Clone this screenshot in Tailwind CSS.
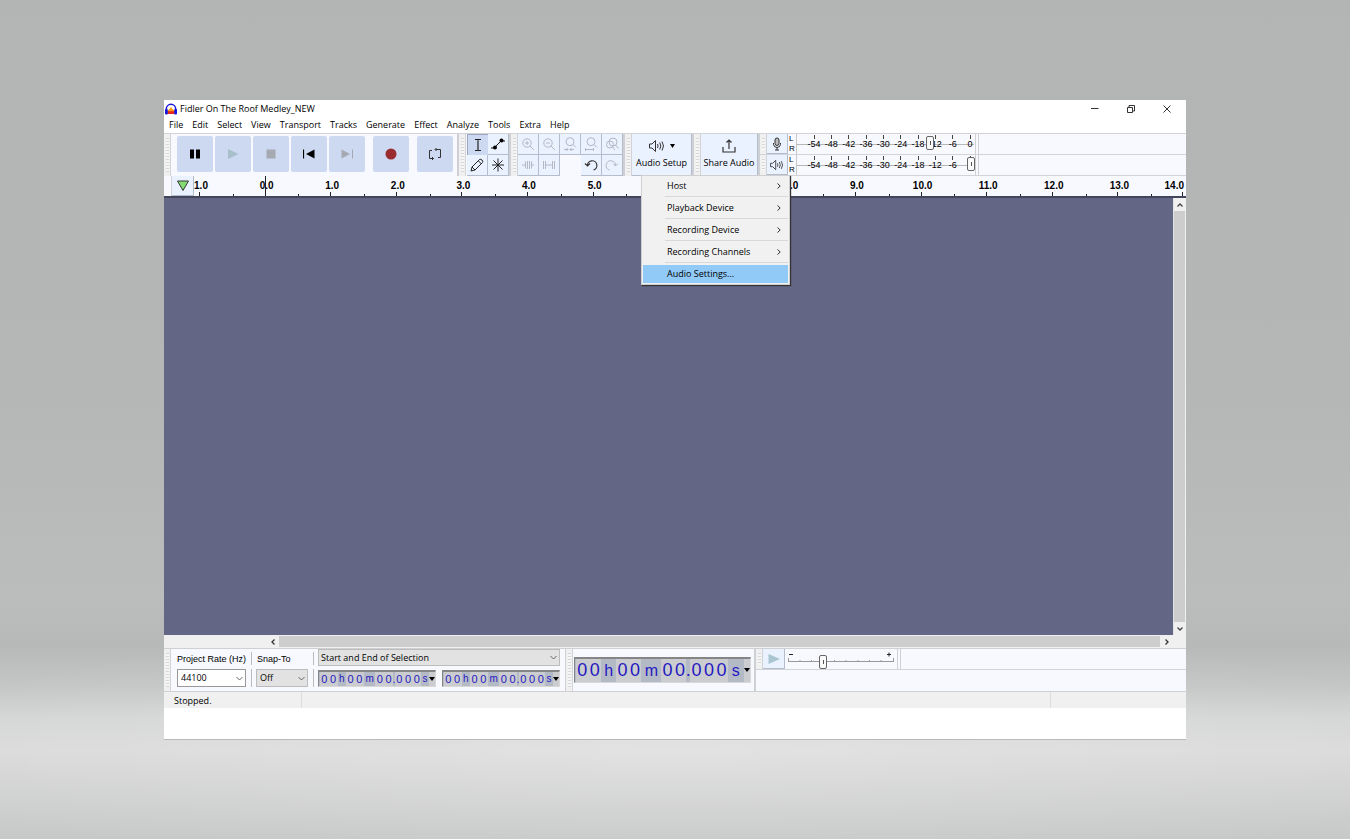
<!DOCTYPE html>
<html lang="en">
<head>
  <meta charset="UTF-8" />
  <meta name="viewport" content="width=device-width, initial-scale=1.0" />
  <title>Fidler On The Roof Medley_NEW</title>
  <script src="https://cdn.jsdelivr.net/npm/@tailwindcss/browser@4"></script>
  <style>
    /* studio backdrop: wall, then a lit floor */
    .backdrop {
      background:
        radial-gradient(ellipse 60% 130px at 50% 750px, rgba(255, 255, 255, 0.2), rgba(255, 255, 255, 0) 100%),
        linear-gradient(to bottom, #b2b5b3 0, #b4b7b5 400px, #bbbdbc 600px, #b6b9b7 645px, #c4c6c5 685px, #d5d7d6 720px, #dadbda 750px, #c7c9c8 839px);
    }
    /* toolbar drag handle */
    .grip {
      background: repeating-linear-gradient(to bottom, #d6d6d6 0 1px, #f6f6f6 1px 3px) center 4px / 3px calc(100% - 8px) no-repeat #f0f0f0;
      border-right: 1px solid #d2d3d6;
      flex: none;
      width: 7px;
    }
    /* slider thumbs */
    input[type=range] {
      appearance: none;
      background: transparent;
      margin: 0;
    }
    input[type=range]::-webkit-slider-thumb {
      appearance: none;
      width: 8px;
      height: 14px;
      border: 1px solid #666;
      border-radius: 2px;
      background: linear-gradient(#555, #555) center / 1px 4px no-repeat #fafafa;
    }
  </style>
</head>
<body class="backdrop min-h-screen px-[164px] py-[100px] font-['Open_Sans','Noto_Sans',sans-serif] text-[9px] leading-3 text-black">
  <main class="flex flex-col bg-white border-b border-[#b9b9b9]">

    <!-- Title bar -->
    <header class="flex items-center h-[17px] pl-px">
      <svg class="w-3 h-3 mr-[3px]" viewBox="0 0 12 12">
        <path d="M1.3 8V6a4.7 4.7 0 0 1 9.4 0v2" fill="none" stroke="#1616d8" stroke-width="1.5" />
        <path d="M2.500 11V7.500L4.500 6 6 4 7.500 6 9.500 7.500V11z" fill="#ff9c1a" />
        <path d="M2.500 8.200h7V11h-7z" fill="#e8261c" />
        <rect x="0" y="6" width="2.800" height="5.500" rx="1" fill="#1616d8" />
        <rect x="9.200" y="6" width="2.800" height="5.500" rx="1" fill="#1616d8" />
      </svg>
      <h1>Fidler On The Roof Medley_NEW</h1>
      <div class="ml-auto flex">
        <button aria-label="Minimize" class="w-9 h-4 flex items-center justify-center">
          <svg class="w-2 h-2" viewBox="0 0 8 8"><path d="M0 3.500h7.500" stroke="#333" /></svg>
        </button>
        <button aria-label="Restore" class="w-9 h-4 flex items-center justify-center">
          <svg class="w-2 h-2" viewBox="0 0 8 8"><path d="M.5 2.500h5v5h-5zM2 2.500V.5h5.500V6H6" fill="none" stroke="#333" /></svg>
        </button>
        <button aria-label="Close" class="w-9 h-4 flex items-center justify-center">
          <svg class="w-2 h-2" viewBox="0 0 8 8"><path d="M.5.5l7 7M7.500.5l-7 7" stroke="#333" /></svg>
        </button>
        <span class="w-px"></span>
      </div>
    </header>

    <!-- Menu bar -->
    <nav class="flex items-center gap-[9px] h-4 pl-[5px]">
      <button>File</button>
      <button>Edit</button>
      <button>Select</button>
      <button>View</button>
      <button>Transport</button>
      <button>Tracks</button>
      <button>Generate</button>
      <button>Effect</button>
      <button>Analyze</button>
      <button>Tools</button>
      <button>Extra</button>
      <button>Help</button>
    </nav>

    <!-- Upper toolbars -->
    <section class="flex h-[43px] border-t border-[#d2d3d6] bg-[#f7f9ff]">
      <!-- Transport -->
      <div class="flex border-r-2 border-[#cfd0d4]">
        <div class="grip"></div>
        <div class="flex items-start pt-[2px] gap-[2px] pl-[6px] pr-1">
          <button aria-label="Pause" class="w-9 h-9 rounded-xs bg-[#cdd9f0] flex items-center justify-center">
            <svg class="w-3 h-3" viewBox="0 0 12 12"><path d="M1 1.500h4v9H1zM7 1.500h4v9H7z" fill="#000" /></svg>
          </button>
          <button aria-label="Play" class="w-9 h-9 rounded-xs bg-[#cdd9f0] flex items-center justify-center">
            <svg class="w-3 h-3" viewBox="0 0 12 12"><path d="M1 1l10.500 5L1 11z" fill="#a6bfcb" /></svg>
          </button>
          <button aria-label="Stop" class="w-9 h-9 rounded-xs bg-[#cdd9f0] flex items-center justify-center">
            <svg class="w-3 h-3" viewBox="0 0 12 12"><path d="M1.500 1.500h9v9h-9z" fill="#a5a9b1" /></svg>
          </button>
          <button aria-label="Skip to Start" class="w-9 h-9 rounded-xs bg-[#cdd9f0] flex items-center justify-center">
            <svg class="w-3 h-3" viewBox="0 0 12 12"><path d="M.5 1.500v9" stroke="#000" stroke-width="1.200" /><path d="M11.500 1.500v9L3 6z" fill="#000" /></svg>
          </button>
          <button aria-label="Skip to End" class="w-9 h-9 rounded-xs bg-[#cdd9f0] flex items-center justify-center">
            <svg class="w-3 h-3" viewBox="0 0 12 12"><path d="M11.500 1.500v9" stroke="#a5a9b1" /><path d="M.5 1.500v9L9 6z" fill="#a5a9b1" /></svg>
          </button>
          <button aria-label="Record" class="ml-[6px] w-9 h-9 rounded-xs bg-[#cdd9f0] flex items-center justify-center">
            <svg class="w-3 h-3" viewBox="0 0 12 12"><circle cx="6" cy="6" r="5.500" fill="#9a2c30" /></svg>
          </button>
          <button aria-label="Loop" class="ml-[6px] w-9 h-9 rounded-xs bg-[#cdd9f0] flex items-center justify-center">
            <svg class="w-3 h-3" viewBox="0 0 12 12" fill="none" stroke="#333">
              <path d="M3 2.500H.5v8h4M9 9.500h2.500v-8h-5" />
              <path d="M7.500 0L6 1.500 7.500 3M3 9l1.500 1.500L3 12" />
            </svg>
          </button>
        </div>
      </div>

      <!-- Tools -->
      <div class="flex border-r-2 border-[#cfd0d4]">
        <div class="grip"></div>
        <div class="grid grid-cols-2 grid-rows-2 pl-px">
          <button aria-label="Selection Tool" class="w-[21px] bg-[#cdd9f0] border-t border-l border-[#9ba7c0] flex items-center justify-center">
            <svg class="w-[14px] h-[14px]" viewBox="0 0 14 14" fill="none" stroke="#222"><path d="M4 1.500h2.500l.5.5.5-.5H10M4 12.500h2.500l.5-.5.5.5H10M7 2v10" stroke-width="1.200" /></svg>
          </button>
          <button aria-label="Envelope Tool" class="w-[21px] bg-[#ebf2ff] border-r border-b border-[#b4bccd] flex items-center justify-center">
            <svg class="w-[14px] h-[14px]" viewBox="0 0 14 14"><path d="M0 11h3l7-7h4" fill="none" stroke="#111" /><circle cx="4" cy="10.500" r="2" /><circle cx="10.500" cy="3.500" r="2" /></svg>
          </button>
          <button aria-label="Draw Tool" class="w-[21px] bg-[#ebf2ff] border-r border-b border-[#b4bccd] flex items-center justify-center">
            <svg class="w-[14px] h-[14px]" viewBox="0 0 14 14" fill="none" stroke="#222"><path d="M1 13l1-4 7.500-7.500q1.300-.7 2.500.5t.5 2.500L5 12zM8.500 3l3 3M2 9l3 3" /></svg>
          </button>
          <button aria-label="Multi-Tool" class="w-[21px] bg-[#ebf2ff] border-r border-b border-[#b4bccd] flex items-center justify-center">
            <svg class="w-[14px] h-[14px]" viewBox="0 0 14 14" fill="none" stroke="#222"><path d="M7 .5v13M1 7h12M2.500 2.500l9 9M11.500 2.500l-9 9" /></svg>
          </button>
        </div>
      </div>

      <!-- Edit -->
      <div class="flex border-r-2 border-[#cfd0d4]">
        <div class="grip"></div>
        <div class="grid grid-cols-5 grid-rows-2">
          <button aria-label="Zoom In" class="w-[21px] bg-[#ebf2ff] border-r border-b border-[#b4bccd] flex items-center justify-center">
            <svg class="w-[14px] h-[14px]" viewBox="0 0 14 14" fill="none" stroke="#b3b8c2"><circle cx="6" cy="6" r="4.200" /><path d="M9 9l4 4M4 6h4M6 4v4" /></svg>
          </button>
          <button aria-label="Zoom Out" class="w-[21px] bg-[#ebf2ff] border-r border-b border-[#b4bccd] flex items-center justify-center">
            <svg class="w-[14px] h-[14px]" viewBox="0 0 14 14" fill="none" stroke="#b3b8c2"><circle cx="6" cy="6" r="4.200" /><path d="M9 9l4 4M4 6h4" /></svg>
          </button>
          <button aria-label="Fit Selection to Width" class="w-[21px] bg-[#ebf2ff] border-r border-b border-[#b4bccd] flex items-center justify-center">
            <svg class="w-[14px] h-[14px]" viewBox="0 0 14 14" fill="none" stroke="#b3b8c2"><circle cx="7" cy="4.700" r="4" /><path d="M10 7.500l3 3M1 12.500h4M7 12.500h4M3.500 11L5 12.500 3.500 14M8.500 11L7 12.500 8.500 14" /></svg>
          </button>
          <button aria-label="Fit Project to Width" class="w-[21px] bg-[#ebf2ff] border-r border-b border-[#b4bccd] flex items-center justify-center">
            <svg class="w-[14px] h-[14px]" viewBox="0 0 14 14" fill="none" stroke="#b3b8c2"><circle cx="7" cy="4.700" r="4" /><path d="M10 7.500l3 3M1 12.500h9M1.500 11v3M9.500 11v3" /></svg>
          </button>
          <button aria-label="Zoom Toggle" class="w-[21px] bg-[#ebf2ff] border-r border-b border-[#b4bccd] flex items-center justify-center">
            <svg class="w-[14px] h-[14px]" viewBox="0 0 14 14" fill="none" stroke="#b3b8c2"><circle cx="8" cy="5" r="4" /><circle cx="5" cy="7.500" r="3.500" /><path d="M10.500 8l3 3.500M7.500 10l2.500 3" /></svg>
          </button>
          <button aria-label="Trim Audio" class="w-[21px] bg-[#ebf2ff] border-r border-b border-[#b4bccd] flex items-center justify-center">
            <svg class="w-[14px] h-[14px]" viewBox="0 0 14 14" fill="none" stroke="#b3b8c2"><path d="M1 7h3M11 7h2M4.500 3.500v7M6.500 3v8M8.500 3v8M10.500 3.500v7" /></svg>
          </button>
          <button aria-label="Silence Audio" class="w-[21px] bg-[#ebf2ff] border-r border-b border-[#b4bccd] flex items-center justify-center">
            <svg class="w-[14px] h-[14px]" viewBox="0 0 14 14" fill="none" stroke="#b3b8c2"><path d="M1.500 3v8M3.500 3v8M10.500 3v8M12.500 3v8M4 7h6" /></svg>
          </button>
          <span></span>
          <button aria-label="Undo" class="w-[21px] bg-[#ebf2ff] border-r border-b border-[#b4bccd] flex items-center justify-center">
            <svg class="w-[14px] h-[14px]" viewBox="0 0 14 14" fill="none" stroke="#333" stroke-width="1.200"><path d="M1 5.500L3.500 8 6 5.500M3.500 8A4.700 4.700 0 1 1 9.500 12" /></svg>
          </button>
          <button aria-label="Redo" class="w-[21px] bg-[#ebf2ff] border-r border-b border-[#b4bccd] flex items-center justify-center">
            <svg class="w-[14px] h-[14px]" viewBox="0 0 14 14" fill="none" stroke="#b3b8c2"><path d="M13 5.500L10.500 8 8 5.500M10.500 8A4.700 4.700 0 1 0 4.500 12" /></svg>
          </button>
        </div>
      </div>

      <!-- Audio setup with its open menu -->
      <div class="relative flex border-r-2 border-[#cfd0d4]">
        <div class="grip"></div>
        <button class="w-[60px] bg-[#ebf2ff] border-r border-b border-[#b4bccd] flex flex-col items-center justify-center gap-[2px]">
          <span class="flex items-center gap-[5px]">
            <svg class="w-4 h-[14px]" viewBox="0 0 16 14" fill="none" stroke="#333"><path d="M.5 5h2.500l3.500-3.500v11L3 9H.5zM8.500 5q1.200 2 0 4M10.700 3.500q2.300 3.500 0 7M13 2.500q3 4.500 0 9" /></svg>
            <svg class="w-[5px] h-1" viewBox="0 0 5 4"><path d="M0 0h5L2.500 4z" /></svg>
          </span>
          <span class="whitespace-nowrap leading-4">Audio Setup</span>
        </button>
        <div class="absolute z-10 left-[16px] top-[41px] w-[149px] p-px bg-[#f1f1f1] border border-[#cfcfcf] shadow-[1px_1px_1px_#333]" role="menu">
          <button role="menuitem" class="flex items-center w-full h-[18px] pl-6 pr-[7px]">Host<svg class="ml-auto w-1 h-[6px]" viewBox="0 0 4 6"><path d="M.5.5L3.200 3 .5 5.500" fill="none" stroke="#333" /></svg></button>
          <hr class="ml-[22px] my-px border-[#d8d8d8]" />
          <button role="menuitem" class="flex items-center w-full h-[19px] pl-6 pr-[7px]">Playback Device<svg class="ml-auto w-1 h-[6px]" viewBox="0 0 4 6"><path d="M.5.5L3.200 3 .5 5.500" fill="none" stroke="#333" /></svg></button>
          <hr class="ml-[22px] my-px border-[#d8d8d8]" />
          <button role="menuitem" class="flex items-center w-full h-[19px] pl-6 pr-[7px]">Recording Device<svg class="ml-auto w-1 h-[6px]" viewBox="0 0 4 6"><path d="M.5.5L3.200 3 .5 5.500" fill="none" stroke="#333" /></svg></button>
          <hr class="ml-[22px] my-px border-[#d8d8d8]" />
          <button role="menuitem" class="flex items-center w-full h-[19px] pl-6 pr-[7px]">Recording Channels<svg class="ml-auto w-1 h-[6px]" viewBox="0 0 4 6"><path d="M.5.5L3.200 3 .5 5.500" fill="none" stroke="#333" /></svg></button>
          <hr class="ml-[22px] mt-px mb-[2px] border-[#d8d8d8]" />
          <button role="menuitem" class="flex items-center w-full h-[18px] pl-6 bg-[#91c9f7]">Audio Settings...</button>
        </div>
      </div>

      <!-- Share audio -->
      <div class="flex border-r-2 border-[#cfd0d4]">
        <div class="grip"></div>
        <button class="w-[57px] bg-[#ebf2ff] border-r border-b border-[#b4bccd] flex flex-col items-center justify-center gap-[2px]">
          <svg class="w-[14px] h-[14px]" viewBox="0 0 14 14" fill="none" stroke="#333" stroke-width="1.200"><path d="M1 8v5h12V8M7 10V1M4.500 3.500L7 1l2.500 2.500" /></svg>
          <span class="whitespace-nowrap leading-4">Share Audio</span>
        </button>
      </div>

      <!-- Recording and playback meters -->
      <div class="flex-1 flex flex-col">
        <div class="flex-1 flex border-b border-[#d2d3d6]">
          <div class="grip"></div>
          <button aria-label="Record Meter" class="w-[21px] bg-[#ebf2ff] border-r border-b border-[#b4bccd] flex items-center justify-center">
            <svg class="w-[14px] h-[14px]" viewBox="0 0 14 14" fill="none" stroke="#333"><rect x="5" y="1" width="4" height="7.500" rx="2" fill="#bbb" /><path d="M3.500 6v1.500Q4 10.500 7 10.500t3.500-3V6M7 10.500V13M5 13h4" /></svg>
          </button>
          <div class="w-2 pl-px flex flex-col justify-center leading-[10px] font-['Liberation_Sans',sans-serif] text-[8px]"><span>L</span><span>R</span></div>
          <div class="relative w-[178px] border-l border-[#c8c8c8] pl-[17px]">
            <hr class="absolute left-0 right-0 top-[10px] border-[#b8b8b8]" />
            <div class="relative grid grid-cols-9 w-[156px] font-['Liberation_Sans',sans-serif] text-[9px]">
              <script>
                [-54, -48, -42, -36, -30, -24, -18, -12, -6].forEach(db => document.write(
                  `<div class="flex flex-col items-center w-0"><i class="w-px h-1 mt-px bg-[#444]"></i><span class="leading-[10px]">${db}</span></div>`));
              </script>
              <div class="absolute right-0 flex flex-col items-center w-0"><i class="w-px h-1 mt-px bg-[#444]"></i><span class="leading-[10px]">0</span></div>
            </div>
            <input type="range" aria-label="Recording volume" min="0" max="100" value="76" class="absolute left-0 top-[2px] w-[178px] h-[14px]" />
          </div>
          <div class="w-1 ml-px border-x border-[#cfd0d4]"></div>
        </div>
        <div class="flex-1 flex border-b border-[#d2d3d6]">
          <div class="grip"></div>
          <button aria-label="Playback Meter" class="w-[21px] bg-[#ebf2ff] border-r border-b border-[#b4bccd] flex items-center justify-center">
            <svg class="w-[14px] h-3" viewBox="0 0 16 14" fill="none" stroke="#333"><path d="M.5 5h2.500l3.500-3.500v11L3 9H.5zM8.500 5q1.200 2 0 4M10.700 3.500q2.300 3.500 0 7M13 2.500q3 4.500 0 9" /></svg>
          </button>
          <div class="w-2 pl-px flex flex-col justify-center leading-[10px] font-['Liberation_Sans',sans-serif] text-[8px]"><span>L</span><span>R</span></div>
          <div class="relative w-[178px] border-l border-[#c8c8c8] pl-[17px]">
            <hr class="absolute left-0 right-0 top-[10px] border-[#b8b8b8]" />
            <div class="relative grid grid-cols-9 w-[156px] font-['Liberation_Sans',sans-serif] text-[9px]">
              <script>
                [-54, -48, -42, -36, -30, -24, -18, -12, -6].forEach(db => document.write(
                  `<div class="flex flex-col items-center w-0"><i class="w-px h-1 mt-px bg-[#444]"></i><span class="leading-[10px]">${db}</span></div>`));
              </script>
              <div class="absolute right-0 flex flex-col items-center w-0"><i class="w-px h-1 mt-px bg-[#444]"></i><span class="leading-[10px]">0</span></div>
            </div>
            <input type="range" aria-label="Playback volume" min="0" max="100" value="100" class="absolute left-0 top-[2px] w-[178px] h-[14px]" />
          </div>
          <div class="w-1 ml-px border-x border-[#cfd0d4]"></div>
        </div>
      </div>
    </section>

    <!-- Timeline ruler -->
    <section class="flex h-[22px] border-b-2 border-b-[#43455c] bg-[#f7f9ff] overflow-hidden">
      <div class="w-2 border-r border-[#d2d3d6]"></div>
      <button aria-label="Timeline Options" class="w-[22px] bg-[#ebf2ff] border-r border-b border-[#b4bccd] flex items-center justify-center">
        <svg class="w-[14px] h-3" viewBox="0 0 14 12"><path d="M1.500 1h11L7 10.500z" fill="#84dc74" stroke="#333" /></svg>
      </button>
      <div class="relative flex-1 grid grid-cols-15 ml-[5px] mr-[3px] font-['Liberation_Sans',sans-serif] text-[10px] font-bold">
        <script>
          ['1.0', '0.0', '1.0', '2.0', '3.0', '4.0', '5.0', '6.0', '7.0', '8.0', '9.0', '10.0', '11.0', '12.0', '13.0'].forEach(t => document.write(
            `<div class="relative flex items-end"><i class="w-px h-1 bg-[#222]"></i><i class="ml-[50%] w-px h-[2px] bg-[#222]"></i>
              <span class="absolute left-[2px] top-1 w-0 flex justify-center">${t}</span></div>`));
        </script>
        <span class="absolute -right-px top-1">14.0</span>
        <i class="absolute right-0 bottom-0 w-px h-1 bg-[#222]"></i>
        <i class="absolute left-1/15 top-0 w-px h-full bg-[#222]"></i>
      </div>
    </section>

    <!-- Track panel -->
    <section class="flex h-[437px]">
      <div class="flex-1 bg-[#636684]"></div>
      <div class="w-[13px] flex flex-col bg-[#f0f0f0] border-l border-[#e4e4e4]">
        <button aria-label="Scroll up" class="h-[13px] flex items-center justify-center"><svg class="w-[6px] h-1" viewBox="0 0 6 4"><path d="M.5 3.500L3 1l2.500 2.500" fill="none" stroke="#444" stroke-width="1.300" /></svg></button>
        <div class="flex-1 bg-[#cdcdcd] mr-px"></div>
        <button aria-label="Scroll down" class="h-[13px] flex items-center justify-center"><svg class="w-[6px] h-1" viewBox="0 0 6 4"><path d="M.5.5L3 3 5.500.5" fill="none" stroke="#444" stroke-width="1.300" /></svg></button>
      </div>
    </section>
    <section class="flex h-[13px] bg-[#f0f0f0]">
      <button aria-label="Scroll left" class="w-[115px] pr-1 flex items-center justify-end"><svg class="w-1 h-[6px]" viewBox="0 0 4 6"><path d="M3.500.5L1 3l2.500 2.500" fill="none" stroke="#333" stroke-width="1.300" /></svg></button>
      <div class="flex-1 my-px bg-[#cdcdcd]"></div>
      <button aria-label="Scroll right" class="w-[13px] mr-[13px] flex items-center justify-center"><svg class="w-1 h-[6px]" viewBox="0 0 4 6"><path d="M.5.5L3 3 .5 5.500" fill="none" stroke="#333" stroke-width="1.300" /></svg></button>
    </section>

    <!-- Lower toolbars -->
    <section class="flex h-11 border-y border-[#cfd0d4] bg-[#f7f9ff]">
      <!-- Selection -->
      <div class="flex border-r border-[#cfd0d4] pr-[5px]">
        <div class="grip"></div>
        <div class="grid grid-cols-[79px_62px_242px] grid-rows-[17px_18px] gap-y-[3px] pl-[6px]">
          <label for="rate" class="flex items-center w-[75px] border-r border-[#bbb] mt-[3px] mb-px whitespace-nowrap font-['Liberation_Sans',sans-serif] text-[9px]">Project Rate (Hz)</label>
          <label for="snap" class="flex items-center w-[58px] border-r border-[#bbb] mt-[3px] mb-px pl-px font-['Liberation_Sans',sans-serif] text-[9px]">Snap-To</label>
          <div class="relative">
            <select aria-label="Selection mode" class="appearance-none w-full h-[17px] pl-[2px] bg-[#e2e2e2] border border-[#bcbcbc]"><option>Start and End of Selection</option></select>
            <svg class="absolute right-[3px] top-[6px] w-[7px] h-[5px]" viewBox="0 0 7 5"><path d="M.5 1l3 3 3-3" fill="none" stroke="#666" /></svg>
          </div>
          <div class="relative w-[75px] pr-[5px] border-r border-[#bbb]">
            <select id="rate" class="appearance-none w-full h-[18px] pl-[3px] bg-white border border-[#999]"><option>44100</option></select>
            <svg class="absolute right-[8px] top-[7px] w-[7px] h-[5px]" viewBox="0 0 7 5"><path d="M.5 1l3 3 3-3" fill="none" stroke="#666" /></svg>
          </div>
          <div class="relative w-[58px] pr-[5px] border-r border-[#bbb]">
            <select id="snap" class="appearance-none w-full h-[18px] pl-[3px] bg-[#e2e2e2] border border-[#bcbcbc]"><option>Off</option></select>
            <svg class="absolute right-[8px] top-[7px] w-[7px] h-[5px]" viewBox="0 0 7 5"><path d="M.5 1l3 3 3-3" fill="none" stroke="#666" /></svg>
          </div>
          <div class="flex justify-between">
            <script>
              // one fixed-width cell per character, like the digit fields of the time control
              const smallCells = {
                '0': 'w-[9px] bg-[#cbcccf]', 'h': 'w-[9px] text-[10px]', 'm': 'w-3 text-[10px]', '.': 'w-[2px]', 's': 'w-2 text-[10px]'
              };
              for (let n = 0; n < 2; n++) {
                document.write(`<div class="flex h-[17px] mt-px w-[118px] pl-px bg-[#b4b9c6] border border-t-2 border-[#d8d8d8] border-t-[#858585] border-l-[#858585] font-['Liberation_Sans',sans-serif] text-[11px] text-[#2418c0]">` +
                  [...'00h00m00.000s'].map(c => `<span class="flex items-center justify-center ${smallCells[c]}">${c}</span>`).join('') +
                  `<button aria-label="Time format" class="flex-1 flex items-center justify-center bg-[#cbcccf]"><svg class="w-[6px] h-1" viewBox="0 0 6 4"><path d="M0 0h6L3 4z" /></svg></button></div>`);
              }
            </script>
          </div>
        </div>
      </div>

      <!-- Time -->
      <div class="flex border-r-2 border-[#cfd0d4] pr-[3px]">
        <div class="grip"></div>
        <div class="flex self-center w-[177px] h-[26px] ml-px mb-px pl-px bg-[#b4b9c6] border border-t-2 border-[#d8d8d8] border-t-[#858585] border-l-[#858585] font-['Liberation_Sans',sans-serif] text-[18px] leading-[23px] text-[#2418c0]">
          <script>
            const bigCells = {
              '0': 'w-[13px] bg-[#cbcccf]', 'h': 'w-4 text-[16px]', 'm': 'w-[21px] text-[16px]', '.': 'w-1', 's': 'w-[17px] text-[16px]'
            };
            document.write([...'00h00m00.000s'].map(c => `<span class="flex items-center justify-center ${bigCells[c]}">${c}</span>`).join(''));
          </script>
          <button aria-label="Time format" class="flex-1 flex items-center justify-center bg-[#cbcccf]"><svg class="w-[6px] h-1" viewBox="0 0 6 4"><path d="M0 0h6L3 4z" /></svg></button>
        </div>
      </div>

      <!-- Play at speed -->
      <div class="flex-1 flex flex-col">
        <div class="flex h-[21px] border-b border-[#d2d3d6]">
          <div class="grip"></div>
          <button aria-label="Play-at-Speed" class="w-[22px] bg-[#ebf2ff] border-r border-b border-[#b4bccd] flex items-center justify-center">
            <svg class="w-3 h-3" viewBox="0 0 12 12"><path d="M.5 1L12 6 .5 11z" fill="#a9c5cf" /></svg>
          </button>
          <div class="relative w-[106px] mx-[3px]">
            <svg class="w-full h-[14px]" viewBox="0 0 106 14" preserveAspectRatio="none"><path d="M.5 9v4M12 11v2M23.500 11v2M35 11v2M46.500 11v2M58 11v2M70 11v2M81.500 11v2M93 11v2M105.500 9v4M0 12.500h106" stroke="#999" /><path d="M1 5.500h4M99 5.500h4M101 3.500v4" stroke="#222" /></svg>
            <input type="range" aria-label="Playback speed" min="0" max="100" value="32" class="absolute left-0 top-[6px] w-full h-[14px]" />
          </div>
          <div class="w-1 border-x border-[#cfd0d4]"></div>
        </div>
      </div>
    </section>

    <!-- Status bar -->
    <footer class="flex items-center h-4 mb-[31px] bg-[#f0f0f0]">
      <span class="w-[138px] pl-[10px] pt-[2px] h-full flex items-center border-r border-[#dcdcdc]">Stopped.</span>
      <span class="flex-1"></span>
      <span class="w-[136px] h-full border-l border-[#dcdcdc]"></span>
    </footer>
  </main>
</body>
</html>
